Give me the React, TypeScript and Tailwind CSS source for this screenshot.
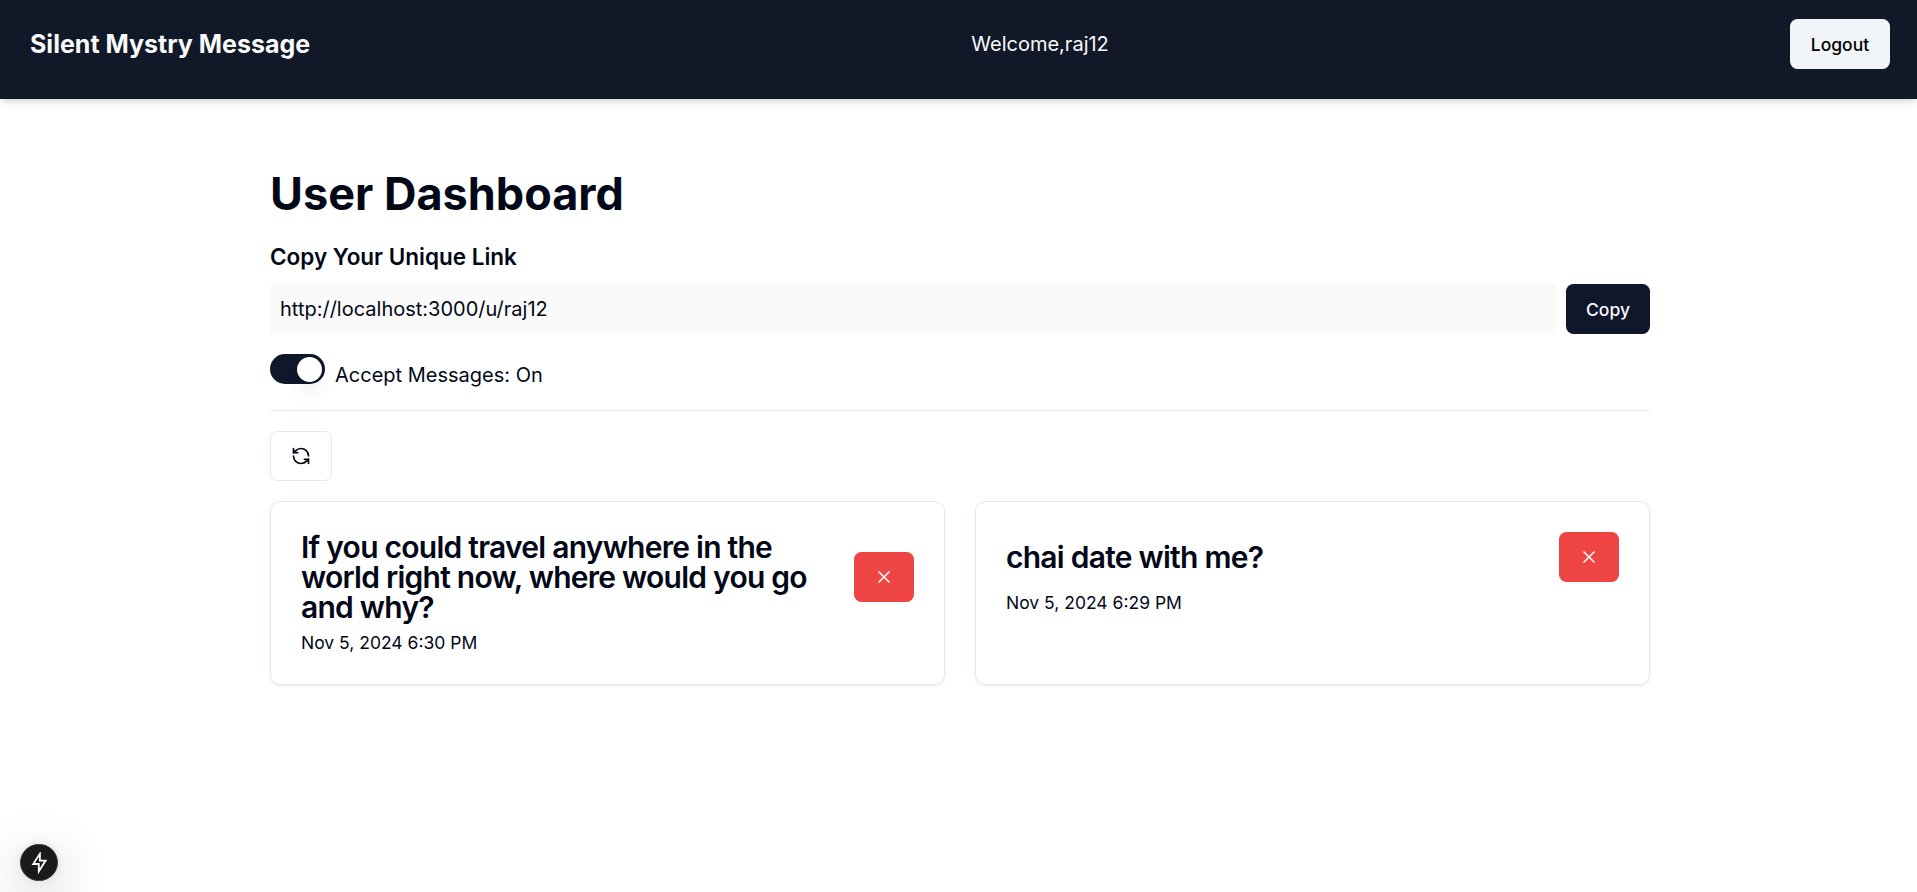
import { RefreshCcw, X } from "lucide-react";

type Message = { id: number; content: string; createdAt: string };

const messages: Message[] = [
  {
    id: 1,
    content: "If you could travel anywhere in the world right now, where would you go and why?",
    createdAt: "Nov 5, 2024 6:30 PM",
  },
  { id: 2, content: "chai date with me?", createdAt: "Nov 5, 2024 6:29 PM" },
];

function Navbar() {
  return (
    <nav className="h-[99px] bg-[#111827] pt-[19px] pr-[27px] pl-[30px] text-gray-50 shadow-[0_5px_7.5px_-1.25px_rgba(0,0,0,0.1),0_2.5px_5px_-2.5px_rgba(0,0,0,0.1)]">
      <div className="flex h-[50px] items-center justify-between">
        <a className="text-[25px] leading-[35px] font-bold">Silent Mystry Message</a>
        <span className="mr-[20px] text-[20px] leading-[30px]">Welcome,raj12</span>
        <button className="h-[50px] w-[100px] rounded-[7.5px] bg-[#f1f5f9] text-[17.5px] leading-[25px] font-medium text-black">
          Logout
        </button>
      </div>
    </nav>
  );
}

function MessageCard({ message }: { message: Message }) {
  return (
    <article className="flex flex-col gap-[7.5px] rounded-[10px] border border-[#e2e8f0] bg-white px-[30px] pt-[30px] pb-[29px] shadow-[0_1.25px_2.5px_0_rgba(0,0,0,0.05)]">
      <div className="flex items-center justify-between">
        <h3 className="max-w-[523px] text-[30px] leading-[30px] font-semibold tracking-[-0.025em]">
          {message.content}
        </h3>
        <button
          aria-label="Delete"
          className="flex h-[50px] w-[60px] shrink-0 items-center justify-center rounded-[7.5px] bg-[#ef4444] text-[#f8fafc]"
        >
          <X size={20} strokeWidth={2} />
        </button>
      </div>
      <p className="text-[17.5px] leading-[25px]">{message.createdAt}</p>
    </article>
  );
}

export default function App() {
  return (
    <div className="relative h-[892px] overflow-hidden bg-white font-['Inter',sans-serif] text-[#020817]">
      <Navbar />
      <main className="ml-[270px] w-[1380px] pt-[70px]">
        <h1 className="text-[45px] leading-[50px] font-bold">User Dashboard</h1>
        <h2 className="mt-[20px] text-[22.5px] leading-[35px] font-semibold">Copy Your Unique Link</h2>
        <div className="mt-[10px] flex items-center gap-[10px]">
          <input
            readOnly
            value="http://localhost:3000/u/raj12"
            className="h-[50px] flex-1 bg-[#fafafa] px-[10px] text-[20px] leading-[30px] outline-none"
          />
          <button className="h-[50px] w-[84px] rounded-[7.5px] bg-[#0f172a] text-[17.5px] leading-[25px] font-medium text-[#f8fafc]">
            Copy
          </button>
        </div>
        <div className="mt-[20px] flex h-[36px] items-start gap-[10px]">
          <button
            role="switch"
            aria-checked="true"
            className="flex h-[30px] w-[55px] items-center justify-end rounded-full bg-[#0f172a] pr-[3px]"
          >
            <span className="size-[25px] rounded-full bg-white shadow-[0_12.5px_18.75px_-3.75px_rgba(0,0,0,0.1),0_5px_7.5px_-5px_rgba(0,0,0,0.1)]" />
          </button>
          <span className="mt-[6px] text-[20px] leading-[30px]">Accept Messages: On</span>
        </div>
        <div className="mt-[20px] h-px bg-[#e2e8f0]" />
        <button
          aria-label="Refresh"
          className="mt-[20px] flex h-[50px] w-[62px] items-center justify-center rounded-[7.5px] border border-[#e2e8f0] bg-white"
        >
          <RefreshCcw size={20} strokeWidth={2} />
        </button>
        <div className="mt-[20px] grid grid-cols-2 gap-[30px]">
          {messages.map((m) => (
            <MessageCard key={m.id} message={m} />
          ))}
        </div>
      </main>
      <div className="absolute top-[844px] left-[20px] flex h-[37px] w-[38px] items-center justify-center rounded-full border border-[#3c3c3e] bg-[#1a1a1b] shadow-[0_14px_50px_rgba(0,0,0,0.25),0_0_8px_rgba(0,0,0,0.08)]">
        <svg width="17" height="22" viewBox="0 0 17 22" fill="none" stroke="white" strokeWidth="1.8">
          <path d="M8.9 1.8 2.2 12h5.6v7.4L14.6 8.6H8.9Z" />
        </svg>
      </div>
    </div>
  );
}
